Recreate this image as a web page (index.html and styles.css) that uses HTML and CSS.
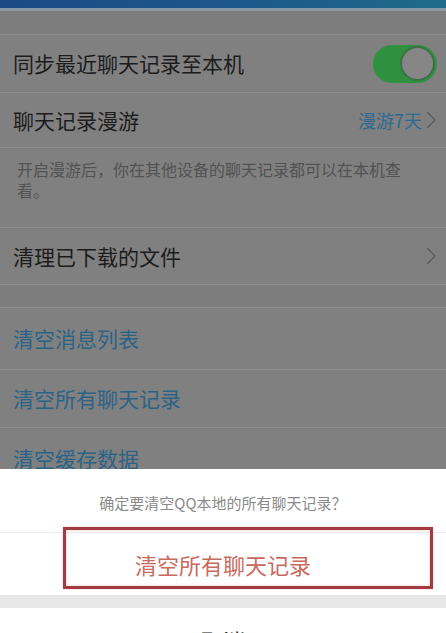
FILE: index.html
```html
<!DOCTYPE html>
<html lang="zh-CN">
<head>
<meta charset="utf-8">
<title>聊天记录</title>
<link rel="stylesheet" href="styles.css">
</head>
<body>
<div class="screen">
  <div class="topbar"></div>
  <div class="topline"></div>
  <div class="gap gap-top"></div>

  <div class="row row-1">
    <span class="label">同步最近聊天记录至本机</span>
    <span class="toggle"><span class="knob"></span></span>
  </div>
  <div class="row row-2">
    <span class="label">聊天记录漫游</span>
    <span class="value">漫游7天<svg class="chev" width="12" height="20" viewBox="0 0 12 20"><polyline points="2,2 10,10 2,18" fill="none" stroke="#5e5e5e" stroke-width="1.6"/></svg></span>
  </div>
  <div class="desc">开启漫游后，你在其他设备的聊天记录都可以在本机查看。</div>
  <div class="row row-3">
    <span class="label">清理已下载的文件</span>
    <svg class="chev" width="12" height="20" viewBox="0 0 12 20"><polyline points="2,2 10,10 2,18" fill="none" stroke="#5e5e5e" stroke-width="1.6"/></svg>
  </div>
  <div class="gap gap-mid"></div>
  <div class="row row-4"><span class="label blue">清空消息列表</span></div>
  <div class="row row-5"><span class="label blue">清空所有聊天记录</span></div>
  <div class="row row-6"><span class="label blue">清空缓存数据</span></div>

  <div class="sheet">
    <div class="sheet-title">确定要清空QQ本地的所有聊天记录？</div>
    <div class="sheet-btn danger">清空所有聊天记录</div>
    <div class="sheet-sep"></div>
    <div class="sheet-btn cancel">取消</div>
    <div class="mark"></div>
  </div>
</div>
</body>
</html>
```

FILE: styles.css
```css
* { box-sizing: border-box; }
html, body {
  margin: 0;
  padding: 0;
  width: 446px;
  height: 633px;
  overflow: hidden;
  background: #808080;
  font-family: "Noto Sans CJK SC", "Noto Sans", sans-serif;
}
.screen {
  position: relative;
  width: 446px;
  height: 633px;
  overflow: hidden;
  background: #808080;
}
.topbar {
  height: 8px;
  background: linear-gradient(90deg, #1b4a86 0%, #1d5a8a 60%, #1f6b8a 100%);
}
.topline {
  height: 3px;
  background: #8c98a2;
}
.gap { background: #7d7d7d; }
.gap-top { height: 24px; border-bottom: 1px solid #8d8d8d; }
.gap-mid { height: 23px; border-bottom: 1px solid #8d8d8d; }

.row {
  display: flex;
  align-items: center;
  justify-content: space-between;
  padding: 0 9px 0 13px;
  border-bottom: 1px solid #8d8d8d;
  background: #808080;
}
.row-1 { height: 58px; }
.row-2 { height: 55px; }
.row-3 { height: 57px; }
.row-4 { height: 62px; }
.row-5 { height: 58px; }
.row-6 { height: 60px; border-bottom: none; }

.label {
  font-size: 21px;
  color: #1c1c1c;
  line-height: 1;
}
.label.blue { color: #2b6386; }

.toggle {
  width: 64px;
  height: 38px;
  border-radius: 19px;
  background: #2f9140;
  display: flex;
  align-items: center;
  justify-content: flex-end;
  padding-right: 2px;
}
.knob {
  width: 35px;
  height: 35px;
  border-radius: 50%;
  background: #868686;
  border: 2px solid #3c7046;
}

.value {
  display: flex;
  align-items: center;
  gap: 3px;
  font-size: 18px;
  color: #2e6a90;
}
.chev { display: block; }

.desc {
  height: 80px;
  padding: 11px 20px 0 17px;
  font-size: 16px;
  line-height: 21px;
  color: #525252;
  border-bottom: 1px solid #8d8d8d;
  background: #808080;
}

/* bottom action sheet overlaying the dimmed page */
.sheet {
  position: absolute;
  left: 0;
  right: 0;
  top: 469px;
  bottom: 0;
  background: #ffffff;
  display: flex;
  flex-direction: column;
  overflow: hidden;
}
.sheet > * { flex-shrink: 0; }
.sheet-title {
  height: 64px;
  display: flex;
  align-items: center;
  justify-content: center;
  padding-top: 4px;
  font-size: 15px;
  color: #8a8a8a;
  border-bottom: 1px solid #ececec;
}
.sheet-btn {
  display: flex;
  align-items: center;
  justify-content: center;
  font-size: 22px;
}
.danger {
  height: 62px;
  color: #c96a5d;
}
.sheet-sep {
  height: 13px;
  background: #e7e7e7;
}
.cancel {
  height: 64px;
  color: #222222;
}
/* red annotation frame drawn over the sheet */
.mark {
  position: absolute;
  left: 63px;
  top: 58px;
  width: 370px;
  height: 62px;
  border: 3px solid #a23a42;
  box-shadow: inset 0 0 3px rgba(214, 120, 120, 0.45), 0 0 2px rgba(214, 120, 120, 0.4);
}
```
